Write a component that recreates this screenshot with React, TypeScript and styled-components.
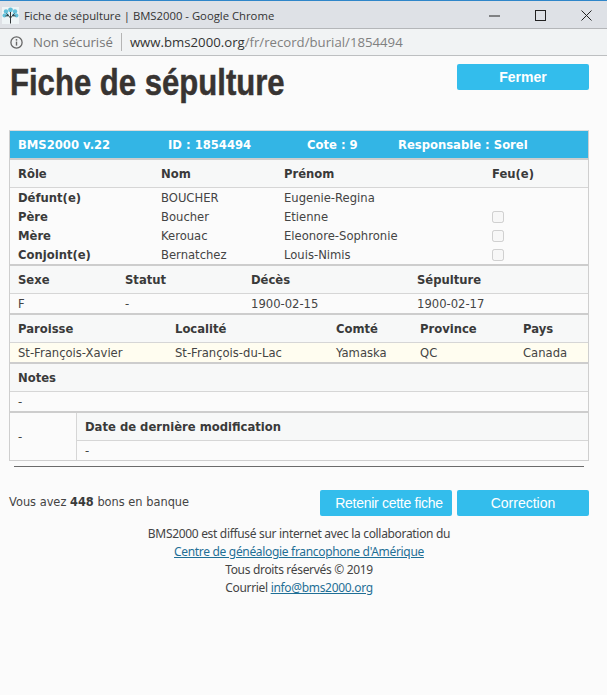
import React from "react";
import styled, { createGlobalStyle } from "styled-components";

const GlobalStyle = createGlobalStyle`
    html, body {
        margin: 0;
        padding: 0;
        height: 100%;
        background: #fbfbfb;
    }
    * {
        box-sizing: border-box;
    }
`;

const Window = styled.div`
    width: 607px;
    height: 695px;
    overflow: hidden;
    font-family: "DejaVu Sans", sans-serif;
    font-size: 11.6px;
    color: #444;
    background: #fbfbfb;
`;

const TitleBar = styled.div`
    height: 29px;
    display: flex;
    align-items: center;
    padding: 1px 0 0 2px;
    background: #dee1e6;
    border-top: 1px solid #2f86c9;
    border-bottom: 1px solid #b4b6b9;
`;

const TitleText = styled.div`
    margin-left: 5px;
    flex: 1;
    font-family: "Open Sans", sans-serif;
    font-size: 11.3px;
    color: #333;
`;

const WinButton = styled.div`
    width: 46px;
    height: 28px;
    padding-left: 4px;
    display: flex;
    align-items: center;
    justify-content: center;
`;

const AddressBar = styled.div`
    height: 27px;
    display: flex;
    align-items: center;
    padding-left: 10px;
    background: #f1f3f4;
    border-bottom: 1px solid #bdbfc1;
    font-family: "Open Sans", sans-serif;
    font-size: 13.2px;
    color: #777;
`;

const Secure = styled.span`
    margin-left: 10px;
    padding-right: 8px;
    border-right: 1px solid #b5b5b5;
    line-height: 18px;
`;

const Url = styled.span`
    margin-left: 8px;
    color: #333;
    & > span {
        color: #808080;
    }
`;

const Page = styled.div`
    padding: 0 18px 0 9px;
`;

const TopRow = styled.div`
    height: 74px;
    display: flex;
    justify-content: space-between;
    align-items: flex-start;
`;

const Title = styled.h1`
    margin: 6px 0 0 1px;
    font-family: "Liberation Sans", sans-serif;
    font-size: 37px;
    line-height: 42px;
    font-weight: 700;
    color: #383432;
    -webkit-text-stroke: 0.5px #383432;
    white-space: nowrap;
    transform: scaleX(0.84);
    transform-origin: left center;
`;

const ActionButton = styled.button<{ $bold?: boolean; $tight?: boolean }>`
    width: 132px;
    height: 26px;
    padding: 0 0 0 ${(p) => (p.$tight ? "6px" : "0")};
    border: none;
    border-radius: 2px;
    background: #33bdec;
    color: #fff;
    font-family: "Liberation Sans", sans-serif;
    font-size: 14px;
    font-weight: ${(p) => (p.$bold ? 700 : 400)};
    letter-spacing: ${(p) => (p.$tight ? "-0.28px" : "0")};
`;

const CloseButton = styled(ActionButton)`
    margin-top: 8px;
`;

const Card = styled.div`
    width: 580px;
    border: 1px solid #cfcfcf;
    border-top-color: #dcdcdc;
`;

const Banner = styled.div`
    height: 27px;
    display: grid;
    grid-template-columns: 150px 139px 91px 1fr;
    align-items: center;
    padding-left: 8px;
    background: #33b5e5;
    color: #fff;
    font-size: 11.6px;
    font-weight: 700;
`;

const Row = styled.div<{ $cols: string; $tint?: boolean; $pale?: boolean; $heavy?: boolean }>`
    display: grid;
    grid-template-columns: ${(p) => p.$cols};
    align-items: center;
    height: ${(p) => (p.$heavy ? "30px" : p.$tint ? "28px" : "19px")};
    padding-left: 8px;
    background: ${(p) => (p.$pale ? "#fffdf0" : p.$tint ? "#f7f8f8" : "#fbfbfb")};
    border-top: ${(p) => (p.$heavy ? "2px solid #cdcdcd" : "none")};
    border-bottom: ${(p) => (p.$tint ? "1px solid #d6d6d6" : "none")};
`;

const HeadCell = styled.div`
    font-weight: 700;
    font-size: 11.6px;
    color: #3a3a3a;
`;

const Cell = styled.div`
    white-space: nowrap;
`;

const RoleCell = styled(Cell)`
    font-weight: 700;
    color: #3a3a3a;
`;

const Check = styled.input.attrs({ type: "checkbox", disabled: true })`
    width: 12px;
    height: 12px;
    margin: 1px 0 0;
    display: block;
`;

const SplitSection = styled.div`
    display: grid;
    grid-template-columns: 67px 1fr;
    border-top: 2px solid #cdcdcd;
`;

const DashCell = styled.div`
    display: flex;
    align-items: center;
    padding-left: 8px;
    border-right: 1px solid #d6d6d6;
`;

const Rule = styled.hr`
    width: 570px;
    height: 1px;
    margin: 5px 0 0 5px;
    border: none;
    background: #6b6b6b;
`;

const BonsRow = styled.div`
    display: flex;
    align-items: flex-start;
    justify-content: space-between;
    width: 580px;
    margin-top: 23px;
`;

const Bons = styled.div`
    margin-top: 5px;
    font-size: 11.4px;
    & > b {
        color: #3a3a3a;
    }
`;

const ButtonGroup = styled.div`
    display: flex;
    gap: 5px;
`;

const Credits = styled.div`
    width: 580px;
    margin-top: 9px;
    text-align: center;
    line-height: 18px;
    font-family: "Noto Sans", sans-serif;
    font-size: 12px;
    letter-spacing: -0.32px;
    & a {
        color: #1f6f96;
        text-decoration: underline;
    }
`;

const rolesCols = "143px 123px 208px 1fr";
const vitalCols = "107px 126px 166px 1fr";
const placeCols = "157px 161px 84px 103px 1fr";

const persons = [
    { role: "Défunt(e)", nom: "BOUCHER", prenom: "Eugenie-Regina", feu: false },
    { role: "Père", nom: "Boucher", prenom: "Etienne", feu: true },
    { role: "Mère", nom: "Kerouac", prenom: "Eleonore-Sophronie", feu: true },
    { role: "Conjoint(e)", nom: "Bernatchez", prenom: "Louis-Nimis", feu: true },
];

function TreeIcon() {
    return (
        <svg width="17" height="17" viewBox="0 0 17 17">
            <rect width="17" height="17" fill="#eef4f6" />
            <g fill="#62c0da">
                <circle cx="4" cy="4.5" r="2.2" />
                <circle cx="8.5" cy="2.8" r="2.4" />
                <circle cx="13" cy="4.5" r="2.2" />
                <circle cx="2.4" cy="8.5" r="1.9" />
                <circle cx="14.6" cy="8.5" r="1.9" />
                <circle cx="5.5" cy="8" r="1.4" />
                <circle cx="11.5" cy="8" r="1.4" />
            </g>
            <path
                d="M8.5 16.5V5M8.5 11L4.5 6.5M8.5 11l4-4.5M6.3 8.6L3.5 9M10.7 8.6l2.8.4"
                stroke="#2f3336"
                strokeWidth="1"
                fill="none"
            />
        </svg>
    );
}

function InfoIcon() {
    return (
        <svg width="13" height="13" viewBox="0 0 13 13">
            <circle cx="6.5" cy="6.5" r="5.6" fill="none" stroke="#666" strokeWidth="1.3" />
            <path d="M6.5 5.6v4" stroke="#666" strokeWidth="1.4" />
            <circle cx="6.5" cy="3.8" r="0.9" fill="#666" />
        </svg>
    );
}

export default function App() {
    return (
        <Window>
            <GlobalStyle />
            <TitleBar>
                <TreeIcon />
                <TitleText>Fiche de sépulture | BMS2000 - Google Chrome</TitleText>
                <WinButton>
                    <svg width="11" height="11" viewBox="0 0 11 11">
                        <path d="M0 6h11" stroke="#222" strokeWidth="1" />
                    </svg>
                </WinButton>
                <WinButton>
                    <svg width="11" height="11" viewBox="0 0 11 11">
                        <rect x="0.5" y="0.5" width="10" height="10" fill="none" stroke="#222" />
                    </svg>
                </WinButton>
                <WinButton>
                    <svg width="11" height="11" viewBox="0 0 11 11">
                        <path d="M0.5 0.5l10 10M10.5 0.5l-10 10" stroke="#222" strokeWidth="1" />
                    </svg>
                </WinButton>
            </TitleBar>
            <AddressBar>
                <InfoIcon />
                <Secure>Non sécurisé</Secure>
                <Url>
                    www.bms2000.org<span>/fr/record/burial/1854494</span>
                </Url>
            </AddressBar>
            <Page>
                <TopRow>
                    <Title>Fiche de sépulture</Title>
                    <CloseButton $bold>Fermer</CloseButton>
                </TopRow>
                <Card>
                    <Banner>
                        <span>BMS2000 v.22</span>
                        <span>ID : 1854494</span>
                        <span>Cote : 9</span>
                        <span>Responsable : Sorel</span>
                    </Banner>
                    <Row $cols={rolesCols} $tint $heavy>
                        <HeadCell>Rôle</HeadCell>
                        <HeadCell>Nom</HeadCell>
                        <HeadCell>Prénom</HeadCell>
                        <HeadCell>Feu(e)</HeadCell>
                    </Row>
                    {persons.map((p) => (
                        <Row key={p.role} $cols={rolesCols}>
                            <RoleCell>{p.role}</RoleCell>
                            <Cell>{p.nom}</Cell>
                            <Cell>{p.prenom}</Cell>
                            <div>{p.feu && <Check />}</div>
                        </Row>
                    ))}
                    <Row $cols={vitalCols} $tint $heavy>
                        <HeadCell>Sexe</HeadCell>
                        <HeadCell>Statut</HeadCell>
                        <HeadCell>Décès</HeadCell>
                        <HeadCell>Sépulture</HeadCell>
                    </Row>
                    <Row $cols={vitalCols}>
                        <Cell>F</Cell>
                        <Cell>-</Cell>
                        <Cell>1900-02-15</Cell>
                        <Cell>1900-02-17</Cell>
                    </Row>
                    <Row $cols={placeCols} $tint $heavy>
                        <HeadCell>Paroisse</HeadCell>
                        <HeadCell>Localité</HeadCell>
                        <HeadCell>Comté</HeadCell>
                        <HeadCell>Province</HeadCell>
                        <HeadCell>Pays</HeadCell>
                    </Row>
                    <Row $cols={placeCols} $pale>
                        <Cell>St-François-Xavier</Cell>
                        <Cell>St-François-du-Lac</Cell>
                        <Cell>Yamaska</Cell>
                        <Cell>QC</Cell>
                        <Cell>Canada</Cell>
                    </Row>
                    <Row $cols="1fr" $tint $heavy>
                        <HeadCell>Notes</HeadCell>
                    </Row>
                    <Row $cols="1fr">
                        <Cell>-</Cell>
                    </Row>
                    <SplitSection>
                        <DashCell>-</DashCell>
                        <div>
                            <Row $cols="1fr" $tint>
                                <HeadCell>Date de dernière modification</HeadCell>
                            </Row>
                            <Row $cols="1fr">
                                <Cell>-</Cell>
                            </Row>
                        </div>
                    </SplitSection>
                </Card>
                <Rule />
                <BonsRow>
                    <Bons>
                        Vous avez <b>448</b> bons en banque
                    </Bons>
                    <ButtonGroup>
                        <ActionButton $tight>Retenir cette fiche</ActionButton>
                        <ActionButton>Correction</ActionButton>
                    </ButtonGroup>
                </BonsRow>
                <Credits>
                    <div>BMS2000 est diffusé sur internet avec la collaboration du</div>
                    <div>
                        <a href="#cgfa">Centre de généalogie francophone d'Amérique</a>
                    </div>
                    <div>Tous droits réservés © 2019</div>
                    <div>
                        Courriel <a href="#mail">info@bms2000.org</a>
                    </div>
                </Credits>
            </Page>
        </Window>
    );
}
